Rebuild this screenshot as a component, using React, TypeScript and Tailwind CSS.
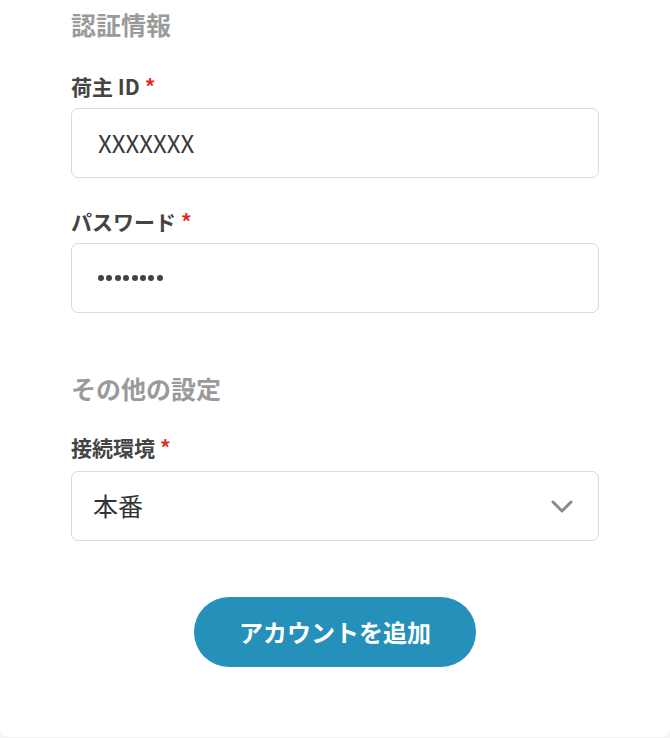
import React from "react";

const font = { fontFamily: '"Noto Sans CJK JP", "Noto Sans", sans-serif' };

function Label({ text }: { text: string }) {
  return (
    <div className="flex items-center text-[21px] leading-[27px] font-bold text-[#444]">
      <span>{text}</span>
      <span className="ml-[5px] text-[#e02b20]">*</span>
    </div>
  );
}

export default function App() {
  return (
    <div className="min-h-screen bg-[#f4f4f4]" style={font}>
      <div className="h-[737px] bg-white rounded-b-[8px] px-[71px] pt-[6px] flex flex-col">
        <h2 className="text-[25px] leading-[36px] font-bold text-[#9a9a9a]">認証情報</h2>

        <div className="mt-[31px]">
          <Label text="荷主 ID" />
        </div>
        <div className="mt-[8px] h-[70px] rounded-[7px] border border-[#d9d9d9] flex items-center px-[26px] text-[24px] text-[#3a3a3a]">
          XXXXXXX
        </div>

        <div className="mt-[30px]">
          <Label text="パスワード" />
        </div>
        <div className="mt-[8px] h-[70px] rounded-[7px] border border-[#d9d9d9] flex items-center px-[26px] gap-[2.4px]" aria-label="password">
          {[0, 1, 2, 3, 4, 5, 6, 7].map((i) => (
            <span key={i} className="w-[6px] h-[6px] rounded-full bg-[#444]" />
          ))}
        </div>

        <h2 className="mt-[57px] text-[25px] leading-[36px] font-bold text-[#9a9a9a]">その他の設定</h2>

        <div className="mt-[28px]">
          <Label text="接続環境" />
        </div>
        <div className="mt-[10px] h-[70px] rounded-[7px] border border-[#d9d9d9] flex items-center justify-between pl-[21px] pr-[25px] text-[25px] text-[#333]">
          <span>本番</span>
          <svg width="22" height="13" viewBox="0 0 22 13" fill="none">
            <path d="M2 2 L11 11 L20 2" stroke="#8a8a8a" strokeWidth="3" strokeLinecap="round" strokeLinejoin="round" />
          </svg>
        </div>

        <div className="mt-[56px] flex justify-center">
          <button className="w-[282px] h-[70px] rounded-full bg-[#2590b9] text-white text-[24px] font-bold">
            アカウントを追加
          </button>
        </div>
      </div>
    </div>
  );
}
